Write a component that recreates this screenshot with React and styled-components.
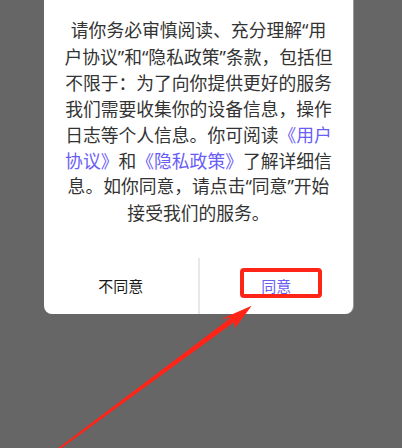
import React from 'react';
import styled, { createGlobalStyle } from 'styled-components';

const GlobalStyle = createGlobalStyle`
  html, body {
    margin: 0;
    padding: 0;
    background: #666666;
    overflow: hidden;
  }
  body {
    font-family: "Noto Sans CJK SC", "Noto Sans", sans-serif;
  }
`;

const Screen = styled.div`
  position: relative;
  width: 402px;
  height: 448px;
  overflow: hidden;
  background: #666666;
`;

const Dialog = styled.div`
  width: 309px;
  margin: -12px 0 0 44px;
  padding-top: 29px;
  background: #ffffff;
  border-radius: 8px;
  box-shadow: 1px 0 0 rgba(255, 255, 255, 0.35);
  overflow: hidden;
`;

const Message = styled.p`
  margin: 0 0 32px;
  font-size: 17.8px;
  line-height: 25.7px;
  color: #333333;
  text-align: center;
  white-space: nowrap;
`;

// quotes stay narrow, as in the original
const Quote = styled.span`
  font-family: "Noto Sans", sans-serif;
`;

const Link = styled.span`
  color: #6a5df6;
`;

const Actions = styled.div`
  display: flex;
  height: 56px;
`;

const ActionButton = styled.button`
  flex: 1;
  display: flex;
  align-items: center;
  justify-content: center;
  padding: 0;
  border: none;
  border-left: ${(props) => (props.divided ? '2px solid #e8e8e8' : 'none')};
  background: transparent;
  font-family: "Noto Sans CJK SC", sans-serif;
  font-size: 15px;
  color: ${(props) => (props.primary ? '#6a5df6' : '#1a1a1a')};
  cursor: pointer;
`;

const Annotation = styled.svg`
  position: absolute;
  left: 0;
  top: 0;
  width: 402px;
  height: 448px;
  pointer-events: none;
`;

const RED = '#ff2418';

const App = () => {
  return (
    <Screen>
      <GlobalStyle />
      <Dialog>
        <Message>
          请你务必审慎阅读、充分理解<Quote>“</Quote>用
          <br />
          户协议<Quote>”</Quote>和<Quote>“</Quote>隐私政策<Quote>”</Quote>条款，包括但
          <br />
          不限于：为了向你提供更好的服务
          <br />
          我们需要收集你的设备信息，操作
          <br />
          日志等个人信息。你可阅读<Link>《用户</Link>
          <br />
          <Link>协议》</Link>和<Link>《隐私政策》</Link>了解详细信
          <br />
          息。如你同意，请点击<Quote>“</Quote>同意<Quote>”</Quote>开始
          <br />
          接受我们的服务。
        </Message>
        <Actions>
          <ActionButton>不同意</ActionButton>
          <ActionButton divided primary>
            同意
          </ActionButton>
        </Actions>
      </Dialog>

      {/* red markup drawn over the screenshot */}
      <Annotation viewBox="0 0 402 448">
        <rect
          x="242"
          y="270"
          width="78"
          height="26"
          rx="2"
          fill="none"
          stroke={RED}
          strokeWidth="4"
        />
        <polygon
          fill={RED}
          points="251.7,305.7 220.7,319.3 230.8,317.8 42.4,460.1 43.4,461.3 234,322.2 235,328.3"
        />
      </Annotation>
    </Screen>
  );
};

export default App;
